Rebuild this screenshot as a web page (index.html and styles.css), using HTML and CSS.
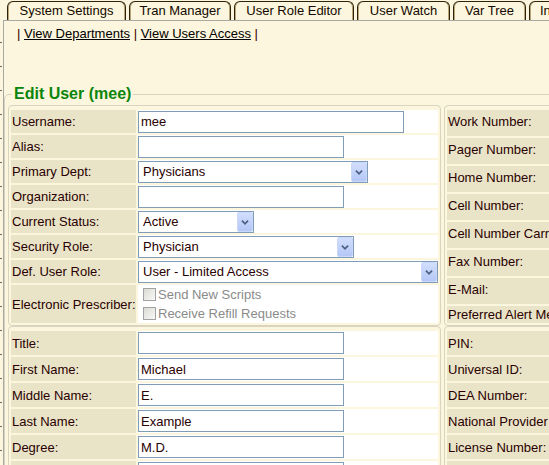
FILE: index.html
```html
<!DOCTYPE html>
<html>
<head>
<meta charset="utf-8">
<title>Edit User</title>
<link rel="stylesheet" href="styles.css">
</head>
<body>
<div class="page">
  <div class="edge"></div>
  <div class="main">
    <div class="tabs">
      <div class="tab t1">System Settings</div>
      <div class="tab t2">Tran Manager</div>
      <div class="tab t3">User Role Editor</div>
      <div class="tab t4">User Watch</div>
      <div class="tab t5">Var Tree</div>
      <div class="tab t6">Inventory</div>
    </div>
    <div class="panel">
      <div class="links"><span class="sep">|</span> <a href="#">View Departments</a> <span class="sep">|</span> <a href="#">View Users Access</a> <span class="sep">|</span></div>
      <fieldset class="edit">
        <legend>Edit User (mee)</legend>
        <div class="grid">
          <div class="box left top">
            <table class="form">
              <tr class="r23"><th>Username:</th><td><input class="in w266" value="mee"></td></tr>
              <tr class="r23"><th>Alias:</th><td><input class="in w206" value=""></td></tr>
              <tr class="r23"><th>Primary Dept:</th><td><label class="sel w230"><select><option>Physicians</option></select><span class="arrow"><svg width="16" height="18" viewBox="0 0 16 18"><path d="M4.5 7.5 L8 11 L11.5 7.5" fill="none" stroke="#4d6185" stroke-width="2"/></svg></span></label></td></tr>
              <tr class="r23"><th>Organization:</th><td><input class="in w206" value=""></td></tr>
              <tr class="r23"><th>Current Status:</th><td><label class="sel w116"><select><option>Active</option></select><span class="arrow"><svg width="16" height="18" viewBox="0 0 16 18"><path d="M4.5 7.5 L8 11 L11.5 7.5" fill="none" stroke="#4d6185" stroke-width="2"/></svg></span></label></td></tr>
              <tr class="r23"><th>Security Role:</th><td><label class="sel w216"><select><option>Physician</option></select><span class="arrow"><svg width="16" height="18" viewBox="0 0 16 18"><path d="M4.5 7.5 L8 11 L11.5 7.5" fill="none" stroke="#4d6185" stroke-width="2"/></svg></span></label></td></tr>
              <tr class="r23"><th>Def. User Role:</th><td><label class="sel w300"><select><option>User - Limited Access</option></select><span class="arrow"><svg width="16" height="18" viewBox="0 0 16 18"><path d="M4.5 7.5 L8 11 L11.5 7.5" fill="none" stroke="#4d6185" stroke-width="2"/></svg></span></label></td></tr>
              <tr class="r38"><th>Electronic Prescriber:</th><td>
                <label class="cb"><input type="checkbox" disabled><span>Send New Scripts</span></label>
                <label class="cb"><input type="checkbox" disabled><span>Receive Refill Requests</span></label>
              </td></tr>
            </table>
          </div>
          <div class="box right top">
            <table class="form">
              <tr class="r26"><th>Work Number:</th><td></td></tr>
              <tr class="r26"><th>Pager Number:</th><td></td></tr>
              <tr class="r26"><th>Home Number:</th><td></td></tr>
              <tr class="r26"><th>Cell Number:</th><td></td></tr>
              <tr class="r26"><th>Cell Number Carrier:</th><td></td></tr>
              <tr class="r26"><th>Fax Number:</th><td></td></tr>
              <tr class="r26"><th>E-Mail:</th><td></td></tr>
              <tr class="r17"><th>Preferred Alert Method:</th><td></td></tr>
            </table>
          </div>
          <div class="box left">
            <table class="form">
              <tr class="r24"><th>Title:</th><td><input class="in w206" value=""></td></tr>
              <tr class="r24"><th>First Name:</th><td><input class="in w206" value="Michael"></td></tr>
              <tr class="r24"><th>Middle Name:</th><td><input class="in w206" value="E."></td></tr>
              <tr class="r24"><th>Last Name:</th><td><input class="in w206" value="Example"></td></tr>
              <tr class="r24"><th>Degree:</th><td><input class="in w206" value="M.D."></td></tr>
              <tr class="r24"><th>Suffix:</th><td><input class="in w206" value=""></td></tr>
            </table>
          </div>
          <div class="box right">
            <table class="form">
              <tr class="r24"><th>PIN:</th><td></td></tr>
              <tr class="r24"><th>Universal ID:</th><td></td></tr>
              <tr class="r24"><th>DEA Number:</th><td></td></tr>
              <tr class="r24"><th>National Provider ID:</th><td></td></tr>
              <tr class="r24"><th>License Number:</th><td></td></tr>
              <tr class="r24"><th>Specialty:</th><td></td></tr>
            </table>
          </div>
        </div>
      </fieldset>
    </div>
  </div>
</div>
</body>
</html>
```
FILE: styles.css
```css
html, body {
  margin: 0;
  padding: 0;
  overflow: hidden;
  background: #fbf6dd;
}
body {
  width: 549px;
  height: 465px;
  font: 13px "Liberation Sans", Arial, sans-serif;
  color: #2a0000;
}
.page {
  display: flex;
  min-height: 465px;
}
.edge {
  width: 3px;
  flex: none;
  background-image: repeating-linear-gradient(to bottom, transparent 0 23px, #6a6458 23px 24px);
  background-size: 2px 100%;
  background-repeat: no-repeat;
  background-position: 0 19px;
}
.main {
  flex: 1;
  min-width: 0;
}
.tabs {
  display: flex;
  gap: 3px;
  padding: 1px 0 0 4px;
  height: 19px;
  white-space: nowrap;
}
.tab {
  box-sizing: border-box;
  flex: none;
  height: 19px;
  border: 1px solid #2f230b;
  border-bottom: 0;
  border-radius: 6px 6px 0 0;
  text-align: center;
  line-height: 18px;
  color: #140800;
  box-shadow: inset 1px 0 0 #b8a676, inset -1px 0 0 #b8a676;
  overflow: hidden;
}
.t1 { width: 119px; }
.t2 { width: 102px; }
.t3 { width: 120px; }
.t4 { width: 93px; }
.t5 { width: 73px; }
.t6 { width: 90px; text-align: left; padding-left: 10px; }
.panel {
  width: 720px;
  border-top: 1px solid #a8a8a4;
  border-left: 1px solid #a8a8a4;
}
.links {
  padding: 5px 0 0 13px;
  line-height: 15px;
}
.links .sep { color: #3a0000; }
.links a {
  color: #000;
  text-decoration: underline;
}
.edit {
  margin: 44px 0 0 0;
  padding: 2px 0 0 3px;
  border: 1px solid #d6d2bb;
  border-radius: 5px;
  min-width: 0;
}
.edit legend {
  margin-left: 4px;
  padding: 0 2px;
  font-weight: bold;
  font-size: 16px;
  line-height: 18px;
  color: #0b850b;
}
.grid {
  display: grid;
  grid-template-columns: 433px 260px;
  column-gap: 3px;
}
.box {
  border: 1px solid #d8d4bd;
  border-radius: 4px;
  padding: 2px 0;
}
.box.top { padding-bottom: 0; }
.form {
  border-collapse: separate;
  border-spacing: 2px;
}
.form th {
  background: #e9e4c8;
  text-align: left;
  font-weight: normal;
  padding: 0 0 0 1px;
  white-space: nowrap;
  vertical-align: middle;
}
.form td {
  background: #fff;
  padding: 0;
  vertical-align: middle;
}
.left .form th { width: 124px; }
.left .form td { width: 300px; }
.right .form th { width: 170px; }
.right .form td { width: 60px; }
.r23 th, .r23 td { height: 23px; }
.r24 th, .r24 td { height: 24px; }
.r26 th, .r26 td { height: 26px; }
.right .r26 th { height: 23px; padding-bottom: 3px; }
.r17 th, .r17 td { height: 17px; }
.r38 th, .r38 td { height: 38px; }
.in {
  display: block;
  box-sizing: border-box;
  height: 22px;
  margin: 0;
  border: 1px solid #7f9db9;
  padding: 0 2px;
  font: inherit;
  color: #2a0000;
  background: #fff;
  outline: none;
}
.w266 { width: 266px; }
.w206 { width: 206px; }
.sel {
  display: flex;
  box-sizing: border-box;
  height: 22px;
  border: 1px solid #7f9db9;
  background: #fff;
}
.w230 { width: 230px; }
.w116 { width: 116px; }
.w216 { width: 216px; }
.w300 { width: 300px; }
.sel select {
  -webkit-appearance: none;
  appearance: none;
  flex: 1;
  min-width: 0;
  margin: 0;
  border: 0;
  padding: 0 0 0 4px;
  background: transparent;
  font: inherit;
  color: #2a0000;
  outline: none;
}
.arrow {
  flex: none;
  width: 16px;
  box-sizing: border-box;
  border: 1px solid #c9d7fb;
  border-radius: 2px;
  background: linear-gradient(#d2defd, #b4c7f6);
  display: flex;
  align-items: center;
  justify-content: center;
}
.cb {
  display: flex;
  align-items: center;
  gap: 2px;
  height: 19px;
  padding-left: 5px;
  color: #8a8a8a;
}
.cb input {
  -webkit-appearance: none;
  appearance: none;
  width: 13px;
  height: 13px;
  margin: 0;
  border: 1px solid #a2a2a2;
  background: linear-gradient(135deg, #dcdcd6, #f8f8f6);
}
```
